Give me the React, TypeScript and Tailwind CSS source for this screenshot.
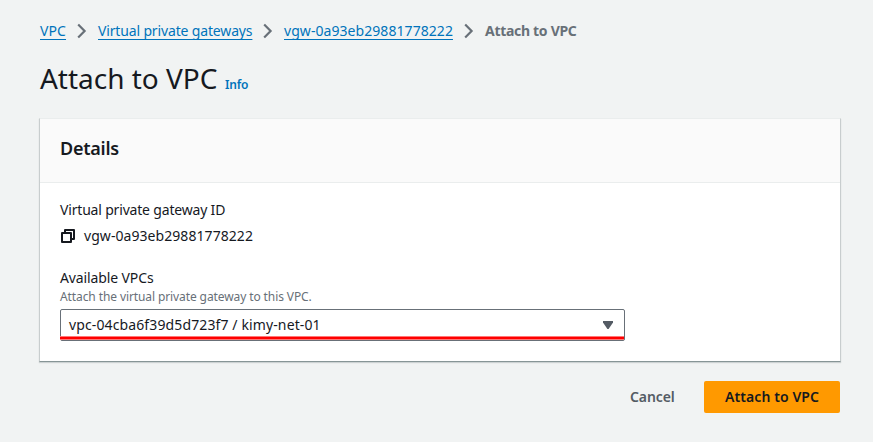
import React from "react";

function Chevron() {
  return (
    <svg className="mx-[11px] h-4 w-[10px] shrink-0" viewBox="0 0 10 16" fill="none" stroke="#687078" strokeWidth="2.2">
      <path d="M1.2 1.5 7.6 8 1.2 14.5" />
    </svg>
  );
}

function Crumb({ children, className }: { children: string; className: string }) {
  return (
    <a href="#" className={`whitespace-nowrap text-[#0073bb] underline decoration-1 underline-offset-[3px] ${className}`}>
      {children}
    </a>
  );
}

export default function App() {
  return (
    <main className="h-[442px] w-[873px] overflow-hidden bg-[#f1f3f3] px-10 pt-5 font-['Noto_Sans',sans-serif] text-sm leading-[22px] text-[#16191f]">
      <nav className="flex h-[22px] items-center">
        <Crumb className="w-[26px] tracking-[0.1px]">VPC</Crumb>
        <Chevron />
        <Crumb className="w-[154px] tracking-[-0.15px]">Virtual private gateways</Crumb>
        <Chevron />
        <Crumb className="w-[169px] tracking-[0.06px]">vgw-0a93eb29881778222</Crumb>
        <Chevron />
        <span className="whitespace-nowrap font-bold tracking-[-0.3px] text-[#687078]">Attach to VPC</span>
      </nav>

      <div className="mt-[18px] flex h-9 items-baseline">
        <h1 className="w-[185px] whitespace-nowrap text-[28px] leading-9 tracking-[-0.02px]">Attach to VPC</h1>
        <a href="#" className="text-xs font-semibold leading-5 tracking-[-0.2px] text-[#0073bb]">Info</a>
      </div>

      <section className="-ml-px mt-[22px] h-[244px] w-[802px] border border-x-[#c8cdce] border-b-[#879596] border-t-[#eaeded] bg-white shadow-[0_1px_1px_rgba(0,28,36,0.15)]">
        <header className="flex h-[64px] items-center border-b border-[#eaeded] bg-[#fafafa] px-5 pb-[5px]">
          <h2 className="text-lg font-semibold tracking-[-0.25px]">Details</h2>
        </header>
        <div className="px-5 pt-4">
          <div className="tracking-[-0.18px]">Virtual private gateway ID</div>
          <div className="mt-1 flex h-[22px] items-center">
            <svg className="mr-2 h-4 w-4" viewBox="0 0 16 16" fill="none" stroke="#16191f" strokeWidth="2" strokeLinejoin="round">
              <path d="M2 5h9v9H2z" />
              <path d="M5 5V2h9v9h-3" />
            </svg>
            <span className="tracking-[0.06px]">vgw-0a93eb29881778222</span>
          </div>
          <div className="mt-5 tracking-[-0.12px]">Available VPCs</div>
          <div className="text-xs leading-4 tracking-[-0.1px] text-[#687078]">Attach the virtual private gateway to this VPC.</div>
          <button className="relative mt-1 flex h-8 w-[565px] items-center justify-between rounded-[2px] border border-[#687078] px-2 text-left">
            <span className="tracking-[0.12px]">vpc-04cba6f39d5d723f7 / kimy-net-01</span>
            <svg className="mr-[3px] h-2 w-[10px]" viewBox="0 0 10 8">
              <path d="M0 0h10v1.5L5.6 8H4.4L0 1.5z" fill="#545b64" />
            </svg>
            <span className="absolute -left-px right-0 top-[26px] h-1 border-y border-[#ff7777] bg-[#ff0000]" />
          </button>
        </div>
      </section>

      <footer className="mt-[19px] flex h-8 w-[800px] items-center justify-end font-semibold">
        <button className="mr-[30px] w-[44px] whitespace-nowrap text-left tracking-[-0.1px] text-[#545b64]">Cancel</button>
        <button className="h-8 w-[136px] rounded-[2px] bg-[#ff9900] tracking-[0.1px] text-[#16191f]">Attach to VPC</button>
      </footer>
    </main>
  );
}
